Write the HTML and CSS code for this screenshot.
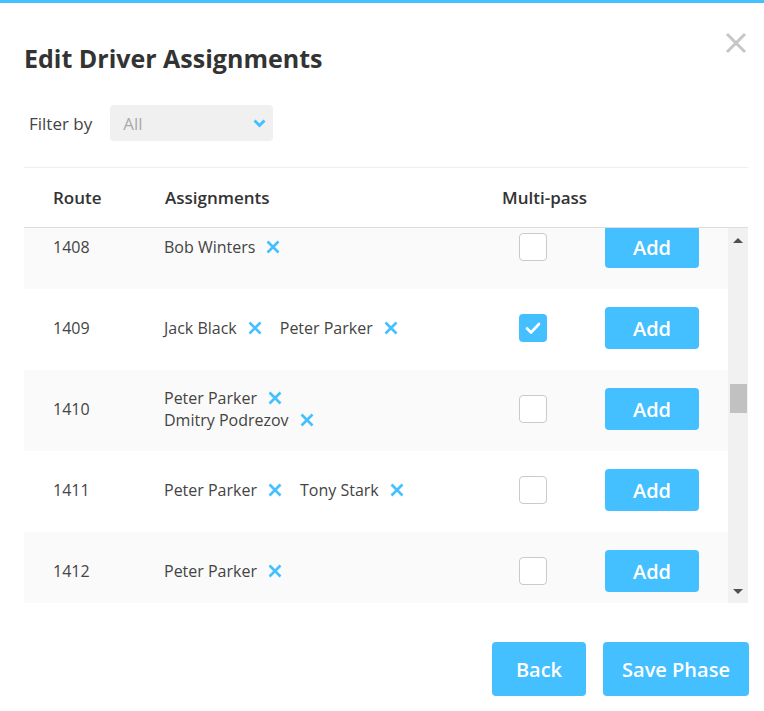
FILE: index.html
```html
<!DOCTYPE html>
<html lang="en">
<head>
<meta charset="utf-8">
<title>Edit Driver Assignments</title>
<link rel="stylesheet" href="styles.css">
</head>
<body>
<div class="topbar"></div>
<div class="modal">
  <button class="close" aria-label="Close">
    <svg width="22" height="22" viewBox="0 0 22 22"><path d="M2 2 L20 20 M20 2 L2 20" stroke="#c6c6c6" stroke-width="3" fill="none"/></svg>
  </button>
  <h1 class="title">Edit Driver Assignments</h1>
  <div class="filter">
    <span class="filter-label">Filter by</span>
    <div class="select">
      <span class="select-value">All</span>
      <svg class="chevron" width="13" height="9" viewBox="0 0 13 9"><path d="M1.5 1.5 L6.5 6.5 L11.5 1.5" stroke="#44bfff" stroke-width="3" fill="none"/></svg>
    </div>
  </div>
  <div class="table">
    <div class="thead">
      <div class="th">Route</div>
      <div class="th">Assignments</div>
      <div class="th">Multi-pass</div>
      <div class="th"></div>
    </div>
    <div class="tbody">
      <div class="rows">
        <div class="row odd first">
          <div class="cell route">1408</div>
          <div class="cell names">
            <span class="chip">Bob Winters<svg class="x" viewBox="0 0 14 14"><path d="M1.5 1.5 L12.5 12.5 M12.5 1.5 L1.5 12.5"/></svg></span>
          </div>
          <div class="cell"><span class="check"></span></div>
          <div class="cell"><button class="btn add">Add</button></div>
        </div>
        <div class="row">
          <div class="cell route">1409</div>
          <div class="cell names">
            <span class="chip">Jack Black<svg class="x" viewBox="0 0 14 14"><path d="M1.5 1.5 L12.5 12.5 M12.5 1.5 L1.5 12.5"/></svg></span>
            <span class="chip">Peter Parker<svg class="x" viewBox="0 0 14 14"><path d="M1.5 1.5 L12.5 12.5 M12.5 1.5 L1.5 12.5"/></svg></span>
          </div>
          <div class="cell"><span class="check checked"><svg viewBox="0 0 28 28" width="28" height="28"><path d="M8 14.5 L12 18.5 L20 10" stroke="#fff" stroke-width="2.6" fill="none" stroke-linecap="round" stroke-linejoin="round"/></svg></span></div>
          <div class="cell"><button class="btn add">Add</button></div>
        </div>
        <div class="row odd">
          <div class="cell route">1410</div>
          <div class="cell names stacked">
            <span class="chip">Peter Parker<svg class="x" viewBox="0 0 14 14"><path d="M1.5 1.5 L12.5 12.5 M12.5 1.5 L1.5 12.5"/></svg></span>
            <span class="chip">Dmitry Podrezov<svg class="x" viewBox="0 0 14 14"><path d="M1.5 1.5 L12.5 12.5 M12.5 1.5 L1.5 12.5"/></svg></span>
          </div>
          <div class="cell"><span class="check"></span></div>
          <div class="cell"><button class="btn add">Add</button></div>
        </div>
        <div class="row">
          <div class="cell route">1411</div>
          <div class="cell names">
            <span class="chip">Peter Parker<svg class="x" viewBox="0 0 14 14"><path d="M1.5 1.5 L12.5 12.5 M12.5 1.5 L1.5 12.5"/></svg></span>
            <span class="chip">Tony Stark<svg class="x" viewBox="0 0 14 14"><path d="M1.5 1.5 L12.5 12.5 M12.5 1.5 L1.5 12.5"/></svg></span>
          </div>
          <div class="cell"><span class="check"></span></div>
          <div class="cell"><button class="btn add">Add</button></div>
        </div>
        <div class="row odd">
          <div class="cell route">1412</div>
          <div class="cell names">
            <span class="chip">Peter Parker<svg class="x" viewBox="0 0 14 14"><path d="M1.5 1.5 L12.5 12.5 M12.5 1.5 L1.5 12.5"/></svg></span>
          </div>
          <div class="cell"><span class="check"></span></div>
          <div class="cell"><button class="btn add">Add</button></div>
        </div>
      </div>
      <div class="scrollbar">
        <div class="sb-btn up"><span class="tri-up"></span></div>
        <div class="sb-track"><div class="sb-thumb"></div></div>
        <div class="sb-btn down"><span class="tri-down"></span></div>
      </div>
    </div>
  </div>
  <div class="footer">
    <button class="btn big back">Back</button>
    <button class="btn big save">Save Phase</button>
  </div>
</div>
</body>
</html>
```

FILE: styles.css
```css
* { box-sizing: border-box; }
html, body { margin: 0; padding: 0; background: #fff; }
body {
  font-family: "Open Sans", "Noto Sans", sans-serif;
  color: #333;
  width: 764px;
  height: 711px;
  overflow: hidden;
}
.topbar { height: 3px; background: #44bfff; }
.modal {
  position: relative;
  padding: 38px 16px 0 24px;
}
.close {
  position: absolute;
  top: 29px;
  right: 17px;
  width: 22px;
  height: 22px;
  padding: 0;
  border: 0;
  background: none;
  display: block;
}
.close svg { display: block; }
.title {
  margin: 0;
  font-size: 25px;
  line-height: 34px;
  font-weight: 700;
  color: #333;
}
.filter {
  display: flex;
  align-items: center;
  margin-top: 30px;
  height: 36px;
  gap: 18px;
}
.filter-label {
  padding-left: 5px;
  font-size: 17px;
  color: #444;
}
.select {
  width: 163px;
  height: 36px;
  background: #f0f0f0;
  border-radius: 4px;
  display: flex;
  align-items: center;
  justify-content: space-between;
  padding: 0 7px 0 13px;
}
.select-value { font-size: 17px; color: #aaa; }
.chevron { display: block; }
.table { margin-top: 26px; border-top: 1px solid #eee; }
.thead, .row {
  display: grid;
  grid-template-columns: 141px 337px 103px 1fr;
  align-items: center;
}
.thead {
  height: 60px;
  border-bottom: 1px solid #ddd;
}
.th {
  font-size: 17px;
  font-weight: 600;
  color: #333;
}
.th:first-child { padding-left: 29px; }
.tbody { display: flex; height: 375px; }
.rows { flex: 1; overflow: hidden; }
.row { height: 81px; padding-bottom: 3px; background: #fff; }
.row.odd { background: #fafafa; }
.row.first { margin-top: -20px; }
.cell { font-size: 16px; color: #444; }
.route { padding-left: 29px; }
.names { display: flex; align-items: center; flex-wrap: wrap; line-height: 22px; margin-left: -1px; }
.names.stacked { flex-direction: column; align-items: flex-start; }
.chip { display: inline-flex; align-items: center; margin-right: 18px; }
.x {
  width: 14px;
  height: 14px;
  margin-left: 11px;
  fill: none;
  stroke: #44bfff;
  stroke-width: 2.6;
}
.check {
  display: block;
  width: 28px;
  height: 28px;
  margin-left: 17px;
  border: 1.5px solid #cacaca;
  border-radius: 4px;
  background: #fff;
}
.check.checked { border: 0; background: #44bfff; }
.check svg { display: block; }
.btn {
  font-family: "Open Sans", "Noto Sans", sans-serif;
  border: 0;
  background: #44bfff;
  color: #fff;
  font-weight: 600;
  border-radius: 4px;
  padding: 0;
}
.add { width: 94px; height: 42px; font-size: 20px; display: block; }
.scrollbar {
  width: 20px;
  background: #f1f1f1;
  display: flex;
  flex-direction: column;
}
.sb-btn { height: 24px; display: flex; align-items: center; justify-content: center; }
.tri-up {
  width: 0; height: 0;
  border-left: 5px solid transparent;
  border-right: 5px solid transparent;
  border-bottom: 5px solid #505050;
}
.tri-down {
  width: 0; height: 0;
  border-left: 5px solid transparent;
  border-right: 5px solid transparent;
  border-top: 5px solid #505050;
}
.sb-track { flex: 1; }
.sb-thumb {
  margin: 132px 1px 0 2px;
  height: 29px;
  background: #c1c1c1;
}
.footer {
  display: flex;
  justify-content: flex-end;
  gap: 17px;
  margin-top: 39px;
  margin-right: -1px;
}
.big { height: 54px; font-size: 20px; }
.back { width: 94px; }
.save { width: 146px; }
```
